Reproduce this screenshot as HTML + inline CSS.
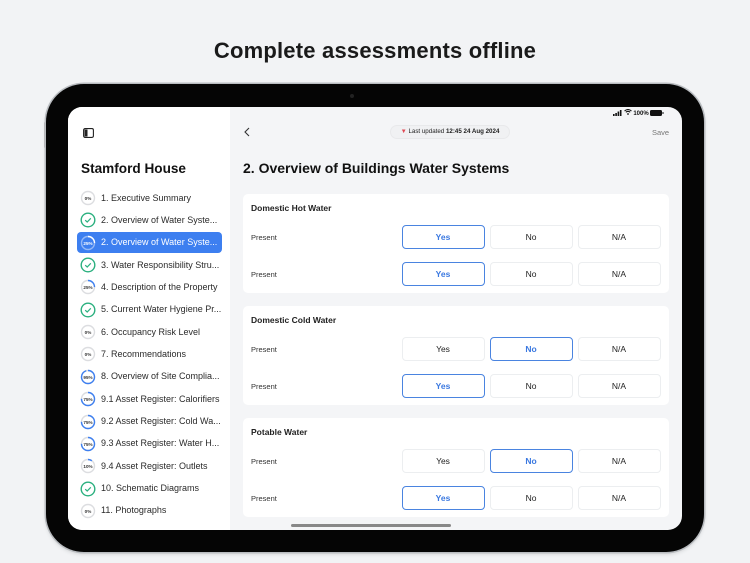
<!DOCTYPE html>
<html><head><meta charset="utf-8">
<style>
*{margin:0;padding:0;box-sizing:border-box}
body{width:750px;height:563px;background:#f2f3f5;font-family:"Liberation Sans",Arial,sans-serif;position:relative;overflow:hidden;color:#111}
.abs{position:absolute}
h1{position:absolute;top:38px;left:0;width:750px;text-align:center;font-size:22px;font-weight:bold;color:#1a1a1a;letter-spacing:0.2px}
.frame{left:46px;top:84px;width:658px;height:468px;background:#050505;border-radius:38px;box-shadow:0 0 0 1.5px #b9bcc0, 0 2px 4px rgba(0,0,0,.15)}
.screen{left:68px;top:107px;width:614px;height:423px;border-radius:14px;overflow:hidden;background:#f4f5f7}
.side{left:0;top:0;width:162px;height:423px;background:#fff}
.item{position:absolute;left:9px;width:145px;height:21px;border-radius:4px;font-size:9px;color:#2a2a2a;line-height:21px;padding-left:24px;white-space:nowrap}
.item.sel{background:#3d7ff0;color:#fff}
.item svg{position:absolute;left:3px;top:2.5px}
.card{position:absolute;left:175px;width:426px;background:#fff;border-radius:5px}
.card .t{position:absolute;left:8px;top:9px;font-size:8.5px;font-weight:bold;color:#222}
.lbl{position:absolute;left:8px;font-size:7.5px;color:#333}
.btn{position:absolute;width:83px;height:24px;border:1px solid #eceef0;border-radius:4px;font-size:8.5px;display:flex;align-items:center;justify-content:center;color:#222;background:#fff}
.btn.on{border:1.5px solid #4a84e0;color:#3a78e0;font-weight:bold}
</style></head><body>
<h1>Complete assessments offline</h1>
<div class="abs" style="left:44px;top:122px;width:2px;height:26px;background:#bbb;border-radius:1px"></div>
<div class="abs" style="left:150px;top:83px;width:60px;height:2px;background:#ccc"></div>
<div class="abs frame"></div>
<div class="abs" style="left:350px;top:94px;width:4px;height:4px;border-radius:2px;background:#222"></div>
<div class="abs screen">
 <div class="abs side">
  <svg class="abs" style="left:15px;top:21px" width="11" height="10" viewBox="0 0 11 10"><rect x="0.6" y="0.6" width="9.8" height="8.8" rx="1.5" fill="none" stroke="#222" stroke-width="1.1"/><rect x="1.5" y="1.5" width="3" height="7" fill="#222"/></svg>
  <div class="abs" style="left:13px;top:54px;font-size:13.6px;font-weight:bold;color:#111">Stamford House</div>
  <div id="list"></div>
 </div>
 <div class="abs" style="left:545px;top:2px;font-size:6px;color:#111;font-weight:bold">
  <svg width="9" height="6" viewBox="0 0 9 6" style="vertical-align:-0.5px"><rect x="0" y="4" width="1.6" height="2" fill="#111"/><rect x="2.3" y="3" width="1.6" height="3" fill="#111"/><rect x="4.6" y="1.5" width="1.6" height="4.5" fill="#111"/><rect x="6.9" y="0" width="1.6" height="6" fill="#111"/></svg>
  <svg width="8" height="6" viewBox="0 0 8 6"><path d="M0.5 2 Q4 -1 7.5 2 M1.8 3.3 Q4 1.3 6.2 3.3" stroke="#111" stroke-width="1" fill="none"/><circle cx="4" cy="5" r="0.9" fill="#111"/></svg>
  100%
  <svg width="14" height="6" viewBox="0 0 14 6" style="vertical-align:-0.5px"><rect x="0" y="0" width="12" height="6" rx="1.5" fill="#111"/><rect x="12.5" y="2" width="1" height="2" fill="#111"/></svg>
 </div>
 <svg class="abs" style="left:176px;top:20px" width="6" height="10" viewBox="0 0 6 10"><path d="M5 1 L1 5 L5 9" stroke="#333" stroke-width="1.1" fill="none"/></svg>
 <div class="abs" style="left:322px;top:18px;width:120px;height:14px;border-radius:7px;background:#f0f1f3;border:1px solid #e8e9eb;font-size:6.2px;line-height:12px;text-align:center;color:#222"><span style="color:#e04a55">&#9660;</span> Last updated <b>12:45 24 Aug 2024</b></div>
 <div class="abs" style="left:584px;top:21px;font-size:7.5px;color:#777">Save</div>
 <div class="abs" style="left:175px;top:53px;font-size:14px;font-weight:bold;color:#111">2. Overview of Buildings Water Systems</div>
 <div id="cards"></div>
 <div class="abs" style="left:223px;top:417px;width:160px;height:2.5px;border-radius:2px;background:#888"></div>
</div>
<script>
var items=[["0","1. Executive Summary"],["c","2. Overview of Water Syste..."],["25","2. Overview of Water Syste...",1],["c","3. Water Responsibility Stru..."],["25","4. Description of the Property"],["c","5. Current Water Hygiene Pr..."],["0","6. Occupancy Risk Level"],["0","7. Recommendations"],["95","8. Overview of Site Complia..."],["75","9.1 Asset Register: Calorifiers"],["75","9.2 Asset Register: Cold Wa..."],["75","9.3 Asset Register: Water H..."],["10","9.4 Asset Register: Outlets"],["c","10. Schematic Diagrams"],["0","11. Photographs"]];
var h="";var C=2*Math.PI*6.5;
items.forEach(function(it,i){
 var y=80.5+i*22.35,sel=it[2];
 var svg='<svg width="16" height="16" viewBox="0 0 16 16">';
 if(it[0]=="c"){svg+='<circle cx="8" cy="8" r="6.8" fill="#fff" stroke="#2bb07f" stroke-width="1.4"/><path d="M5.2 8.2 L7.2 10 L10.8 6.3" stroke="#2bb07f" stroke-width="1.2" fill="none"/>';}
 else{var p=+it[0];var ring=sel?"rgba(255,255,255,.45)":"#dcdde0";var fg=sel?"#fff":"#3d7ff0";
 svg+='<circle cx="8" cy="8" r="6.5" fill="'+(sel?"#3d7ff0":"#fff")+'" stroke="'+ring+'" stroke-width="1.4"/>';
 if(p>0)svg+='<circle cx="8" cy="8" r="6.5" fill="none" stroke="'+fg+'" stroke-width="1.4" stroke-dasharray="'+(C*p/100)+' '+C+'" transform="rotate(-90 8 8)"/>';
 svg+='<text x="8" y="9.8" font-size="4.6" font-weight="bold" text-anchor="middle" fill="'+(sel?"#fff":"#333")+'" font-family="Liberation Sans">'+p+'%</text>';}
 svg+='</svg>';
 h+='<div class="item'+(sel?' sel':'')+'" style="top:'+y+'px">'+svg+it[1]+'</div>';
});
document.getElementById("list").innerHTML=h;
var cards=[["Domestic Hot Water",87,[0,0]],["Domestic Cold Water",199,[1,0]],["Potable Water",311,[1,0]]];
var c="";
cards.forEach(function(cd){
 c+='<div class="card" style="top:'+cd[1]+'px;height:99px"><div class="t">'+cd[0]+'</div>';
 [0,1].forEach(function(r){
  var ty=31+r*36.5;
  c+='<div class="lbl" style="top:'+(ty+8)+'px">Present</div>';
  ["Yes","No","N/A"].forEach(function(b,j){
   c+='<div class="btn'+(cd[2][r]==j?' on':'')+'" style="left:'+(158.5+j*88)+'px;top:'+ty+'px">'+b+'</div>';
  });
 });
 c+='</div>';
});
document.getElementById("cards").innerHTML=c;
</script>
</body></html>
